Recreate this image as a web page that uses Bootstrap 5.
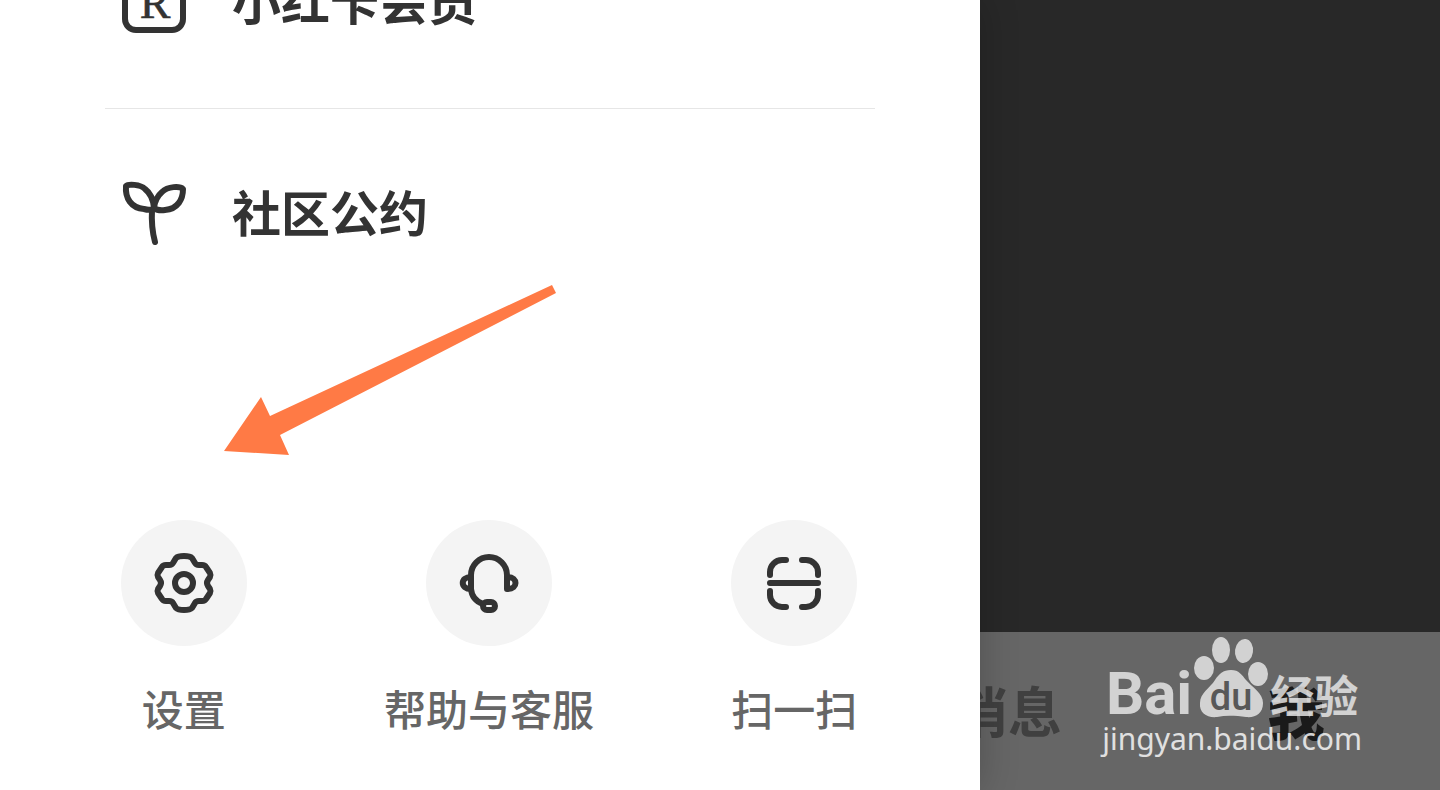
<!DOCTYPE html>
<html lang="zh-CN">
<head>
<meta charset="utf-8">
<meta name="viewport" content="width=device-width, initial-scale=1">
<title>社区公约</title>
<link href="https://cdn.jsdelivr.net/npm/bootstrap@5.3.0/dist/css/bootstrap.min.css" rel="stylesheet">
<style>
  body { font-family: "Noto Sans CJK SC", sans-serif; background: #282828; }
  .screen { display: grid; grid-template: minmax(100vh, auto) / 100%; }
  .screen > * { grid-area: 1 / 1; }
  .drawer { width: 68.0556%; background: #fff; z-index: 1; box-shadow: 0 0 36px rgba(0,0,0,.22); }
  /* the list is scrolled up under the top edge */
  .menu { margin: -104px 105px 0; }
  .menu-row { height: 212px; padding: 0 0 3px 16px; gap: 45px; font-size: 49px; line-height: 64px; font-weight: 700; color: #333; }
  .menu-row span { padding-bottom: 4px; }
  .menu-row + .menu-row { border-top: 1px solid #e6e6e6; }
  .line-icon { fill: none; stroke: #333; stroke-width: 6; stroke-linecap: round; stroke-linejoin: round; }
  .actions { padding: 0 33px 60px 31px; }
  .action { gap: 40px; font-size: 42px; line-height: 44px; font-weight: 500; color: #666; }
  .disc { width: 126px; height: 126px; background: #f4f4f4; }
  .tabbar { height: 158px; background: #666; padding-bottom: 2px; }
  .tab { width: 20%; font-size: 54px; line-height: 64px; font-weight: 700; color: #404040; }
  .tab.current { font-size: 57px; font-weight: 900; color: #1a1a1a; }
  .arrow { left: 224px; top: 284px; }
  .watermark { right: 78px; bottom: 32px; z-index: 2; opacity: .8; color: #eee; }
  .wm-latin { font: 700 60px/52px Roboto, sans-serif; }
  .wm-cjk { font-size: 44px; line-height: 52px; font-weight: 700; }
  .wm-url { font: 400 30px/38px "Noto Sans", sans-serif; color: #fff; }
</style>
</head>
<body>
<div class="screen position-relative overflow-hidden">
  <main class="d-flex flex-column justify-content-end">
    <nav class="tabbar d-flex justify-content-end align-items-center">
      <a href="#" class="tab text-center text-decoration-none">消息</a>
      <a href="#" class="tab current text-center text-decoration-none">我</a>
    </nav>
  </main>

  <aside class="drawer d-flex flex-column">
    <nav class="menu">
      <a href="#" class="menu-row d-flex align-items-center text-decoration-none">
        <svg width="66" height="66" viewBox="0 0 66 66" aria-hidden="true">
          <rect class="line-icon" x="4" y="4" width="58" height="58" rx="11"/>
          <text x="34" y="50" text-anchor="middle" font-family="Liberation Serif, serif" font-size="46" font-weight="400" fill="#333" stroke="#333" stroke-width=".5">R</text>
        </svg>
        <span>小红卡会员</span>
      </a>
      <a href="#" class="menu-row d-flex align-items-center text-decoration-none">
        <svg class="line-icon" width="66" height="66" viewBox="0 0 66 66" aria-hidden="true">
          <path d="M5 6C7 4 19 4 24 9Q32 15 33 28Q30 31 23 29C10 28 4 18 5 6ZM62 9C59 6 47 6 41 12Q34 18 33 28Q37 31 44 30C57 29 62 19 62 9ZM31 30Q30 47 34 62"/>
        </svg>
        <span>社区公约</span>
      </a>
    </nav>

    <div class="actions row g-0 mt-auto">
      <button type="button" class="action col btn border-0 p-0 d-flex flex-column align-items-center">
        <span class="disc rounded-circle d-flex align-items-center justify-content-center">
          <svg class="line-icon" width="64" height="64" viewBox="-32 -32 64 64" aria-hidden="true">
            <path d="M-8-25Q-6-27 0-27Q6-27 8-25L11-20Q12-18 15-18L18-18Q21-18 22-16L26-10Q27-8 26-6L24-3Q22 0 24 3L26 6Q27 8 26 10L22 16Q21 18 18 18L15 18Q12 18 11 20L8 25Q6 27 0 27Q-6 27-8 25L-11 20Q-12 18-15 18L-18 18Q-21 18-22 16L-26 10Q-27 8-26 6L-24 3Q-22 0-24-3L-26-6Q-27-8-26-10L-22-16Q-21-18-18-18L-15-18Q-12-18-11-20Z"/>
            <circle r="9"/>
          </svg>
        </span>
        <span>设置</span>
      </button>
      <button type="button" class="action col btn border-0 p-0 d-flex flex-column align-items-center">
        <span class="disc rounded-circle d-flex align-items-center justify-content-center">
          <svg class="line-icon" width="64" height="64" viewBox="-32 -32 64 64" aria-hidden="true">
            <path d="M-18-6V-8A18 18 0 0 1 18-8V6H19C29 6 29-6 19-6H18M-18-6C-29-6-29 6-18 6V-6M-18 6Q-17 17-6 21"/>
            <rect x="-6" y="19" width="12" height="8" rx="4"/>
          </svg>
        </span>
        <span>帮助与客服</span>
      </button>
      <button type="button" class="action col btn border-0 p-0 d-flex flex-column align-items-center">
        <span class="disc rounded-circle d-flex align-items-center justify-content-center">
          <svg class="line-icon" width="64" height="64" viewBox="-32 -32 64 64" aria-hidden="true">
            <path d="M-24-8V-11A12 12 0 0 1-12-23H-8M8-23H12A12 12 0 0 1 24-11V-8M-24 8V12A12 12 0 0 0-12 24H-8M8 24H12A12 12 0 0 0 24 12V8M-24 0H24"/>
          </svg>
        </span>
        <span>扫一扫</span>
      </button>
    </div>
  </aside>

  <svg class="arrow position-absolute z-1" width="334" height="172" viewBox="0 0 334 172" aria-hidden="true">
    <path fill="#ff7a45" d="M0 167L37 113L46 132L328 1L332 9L56 151L65 171Z"/>
  </svg>

  <div class="watermark position-absolute d-flex flex-column align-items-center">
    <div class="d-flex align-items-end">
      <span class="wm-latin">Bai</span>
      <svg width="78" height="84" viewBox="0 0 78 84" aria-hidden="true">
        <g fill="currentColor">
          <ellipse cx="12" cy="32" rx="10" ry="12"/>
          <ellipse cx="29" cy="14" rx="9" ry="13"/>
          <ellipse cx="52" cy="15" rx="9" ry="12" transform="rotate(8 52 15)"/>
          <ellipse cx="66" cy="38" rx="10" ry="12"/>
          <path d="M39 34C47 34 50 39 54 44C60 51 71 57 71 67C71 78 63 82 54 81C45 80 35 79 25 81C15 82 7 77 8 67C8 57 18 52 23 44C27 38 31 34 39 34Z"/>
        </g>
        <text x="39" y="74" text-anchor="middle" font-family="Roboto, sans-serif" font-weight="500" font-size="38" fill="#555">du</text>
      </svg>
      <span class="wm-cjk">经验</span>
    </div>
    <span class="wm-url">jingyan.baidu.com</span>
  </div>
</div>
<script src="https://cdn.jsdelivr.net/npm/bootstrap@5.3.0/dist/js/bootstrap.bundle.min.js"></script>
</body>
</html>
